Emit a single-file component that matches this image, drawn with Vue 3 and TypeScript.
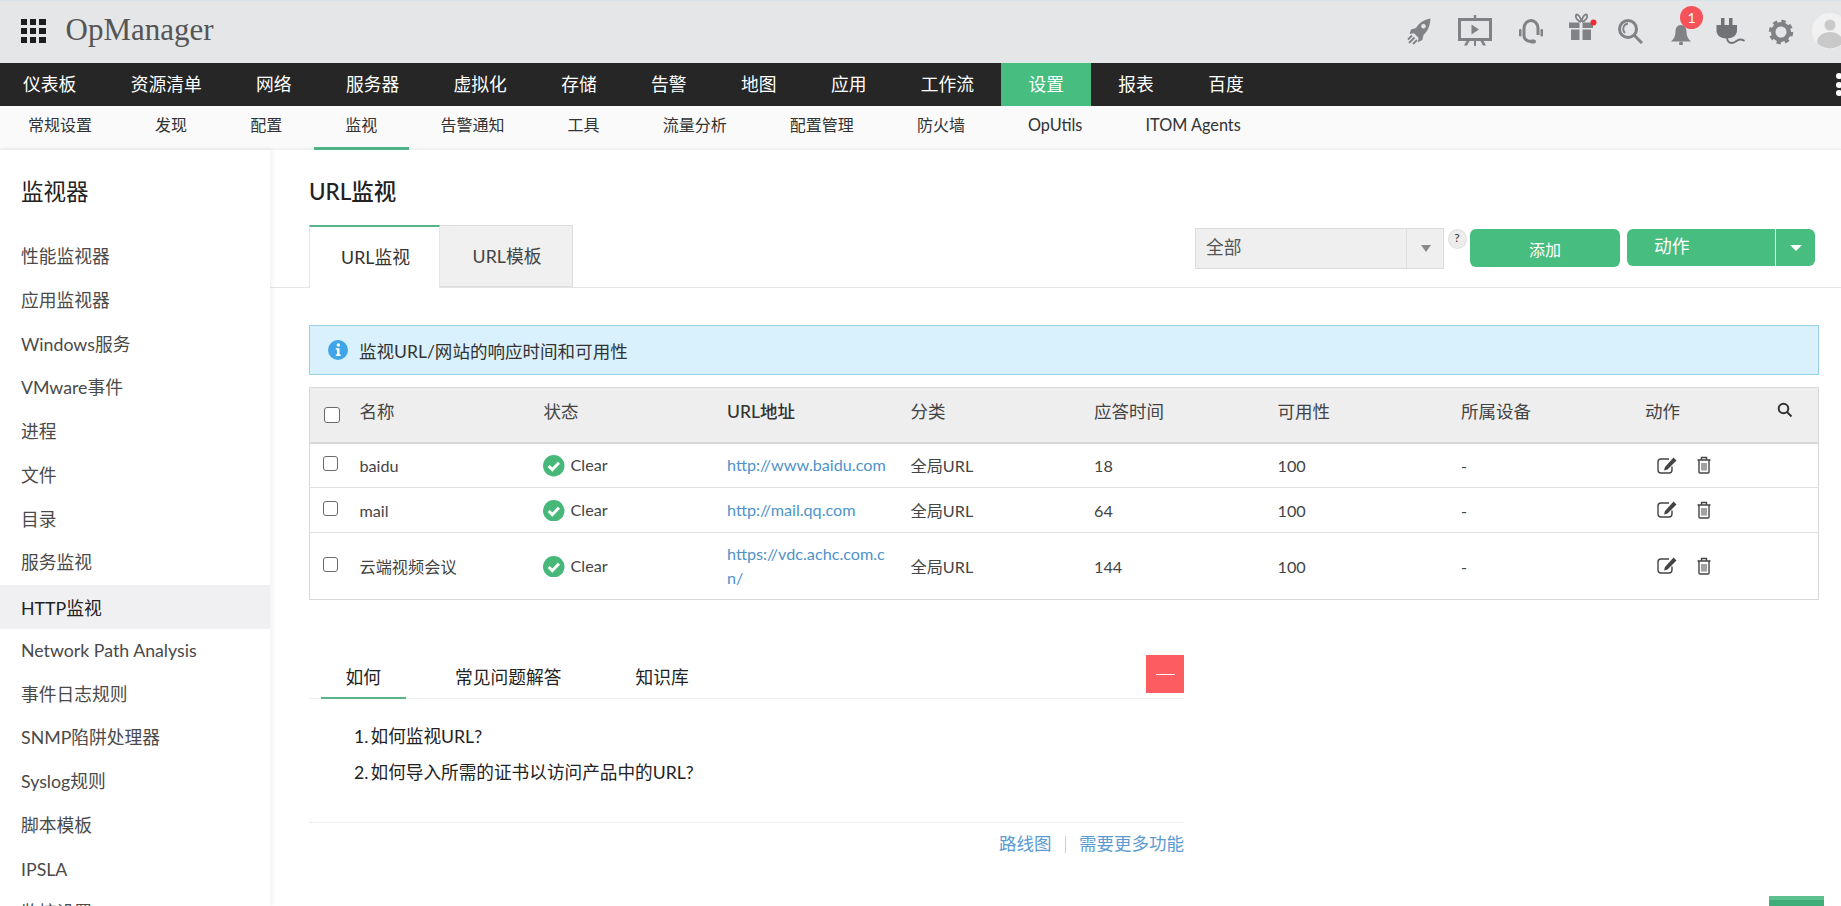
<script setup lang="ts">
const mainNav: string[] = ['仪表板', '资源清单', '网络', '服务器', '虚拟化', '存储', '告警', '地图', '应用', '工作流', '设置', '报表', '百度']
const subNav: string[] = ['常规设置', '发现', '配置', '监视', '告警通知', '工具', '流量分析', '配置管理', '防火墙', 'OpUtils', 'ITOM Agents']
const sideItems: string[] = ['性能监视器', '应用监视器', 'Windows服务', 'VMware事件', '进程', '文件', '目录', '服务监视', 'HTTP监视', 'Network Path Analysis', '事件日志规则', 'SNMP陷阱处理器', 'Syslog规则', '脚本模板', 'IPSLA', '监控设置']

interface Row { name: string; url: string; time: string; tall?: boolean }
const rows: Row[] = [
  { name: 'baidu', url: 'http://www.baidu.com', time: '18' },
  { name: 'mail', url: 'http://mail.qq.com', time: '64' },
  { name: '云端视频会议', url: 'https://vdc.achc.com.cn/', time: '144', tall: true },
]
const isLatin = (s: string): boolean => /^[A-Za-z]/.test(s)
</script>

<template>
  <div class="page">
    <header class="top">
      <div class="apps"><i v-for="n in 9" :key="n"></i></div>
      <div class="brand">OpManager</div>
      <div class="tools">
        <svg class="ic rocket" viewBox="0 0 24 27">
          <path fill-rule="evenodd" d="M23.5 0.5C17 1.5 12 5 9 10L4 11.5 2.5 16l4.5-.8 4.5 4.6-.6 4.4 4.4-2.2L16.500 17C20.500 13.500 23 8 23.500 .5ZM16.500 6a2.300 2.300 0 1 1 0 4.600 2.300 2.300 0 0 1 0-4.600Z" />
          <path class="ln" d="M5 17.500 1 21.500M7.500 19.500 2 25M10 22 6 26" />
        </svg>
        <svg class="ic board" viewBox="0 0 34 31">
          <path d="M15.800 0h2.400v4h-2.400z" />
          <path fill-rule="evenodd" d="M0 3h34v23H0ZM3 6v17h28V6Z" />
          <path d="M13.500 9.500 21 14.500l-7.500 5zM16 26h2v5h-2zM8.500 26h3l-2.500 4.500H6zM22.500 26h3l2.500 4.500h-3z" />
        </svg>
        <svg class="ic head" viewBox="0 0 24 26">
          <path class="ln3" d="M19 16V9.500a7 8 0 0 0-14 0v7c0 3 2.500 5.300 6.500 6" />
          <rect x="0" y="10" width="2.500" height="7.500" rx="1.200" />
          <rect x="21.500" y="10" width="2.500" height="7.500" rx="1.200" />
          <rect x="10.500" y="20.500" width="6.500" height="4" rx="2" />
        </svg>
        <svg class="ic gift" viewBox="0 0 28 27">
          <path class="ln1" d="M12 9C8.500 8 6 4.500 7 2 8.500 0 12 4.500 12.500 9M12.500 9c.5-4.500 3.500-9 5.500-7 1 2.500-1.500 6-5 7" />
          <path d="M0 9.500h10.500V15H0zM13.500 9.500H24V15H13.500zM2 16.500h8.500V27H2zM13.500 16.500H22V27h-8.500z" />
          <circle class="dot" cx="24.500" cy="9.500" r="3" />
        </svg>
        <svg class="ic find" viewBox="0 0 25 25">
          <circle class="ln3" cx="10" cy="10" r="8.500" />
          <path class="ln1" d="M10 4.500a5.500 5.500 0 0 0-3 9.500" />
          <path class="ln3" d="M16.500 16.500 24 24" />
        </svg>
        <span class="bell-wrap">
          <svg class="ic bell" viewBox="0 0 20 20">
            <path d="M10 0C6 0 4.500 3 4.500 7c0 4-1.500 7-4.500 9.500h20c-3-2.500-4.500-5.500-4.500-9.500 0-4-1.500-7-5.500-7Z" />
            <circle cx="10" cy="18.500" r="2" />
          </svg>
          <b class="badge">1</b>
        </span>
        <svg class="ic plug" viewBox="0 0 29 27">
          <path d="M5 0h3.500v8H5zM13 0h3.500v8H13zM0.500 7h20.500v5.500c0 5-4.500 8-10.300 8S.5 17.500.5 12.500Z" />
          <path class="ln1 wire" d="M11 19c0 4 2 6 5 6s5-3.500 8-3.500 3.500 1 4.500 1.500" />
        </svg>
        <svg class="ic gear" viewBox="0 0 26 26">
          <circle class="g1" cx="13" cy="13" r="7.800" />
          <circle class="g2" cx="13" cy="13" r="10.500" />
        </svg>
        <svg class="ic avatar" viewBox="0 0 36 36">
          <circle cx="18" cy="18" r="18" fill="#f1f1f1" />
          <circle cx="18" cy="12" r="5.500" fill="#c9c9c9" />
          <path fill="#c9c9c9" d="M5 30c0-7 6-11 13-11s13 4 13 11a18 18 0 0 1-26 0Z" />
        </svg>
      </div>
    </header>

    <nav class="main-nav">
      <a v-for="item in mainNav" :key="item" :class="{ on: item === '设置' }">{{ item }}</a>
      <span class="more"><i></i><i></i><i></i></span>
    </nav>

    <nav class="sub-nav">
      <a v-for="item in subNav" :key="item" :class="{ on: item === '监视', latin: isLatin(item) }">{{ item }}</a>
    </nav>

    <div class="body">
      <aside class="side">
        <h2>监视器</h2>
        <a v-for="item in sideItems" :key="item" :class="{ on: item === 'HTTP监视' }">{{ item }}</a>
      </aside>

      <main class="content">
        <h1>URL监视</h1>
        <div class="tabbar">
          <div class="tab active">URL监视</div>
          <div class="tab">URL模板</div>
          <div class="actions">
            <div class="select"><span>全部</span><em></em></div>
            <span class="help">?</span>
            <button class="btn add">添加</button>
            <div class="btn split"><span>动作</span><em></em></div>
          </div>
        </div>

        <section class="inner">
          <div class="info">
            <svg class="info-ic" viewBox="0 0 20 20">
              <circle cx="10" cy="10" r="10" fill="#3fa5e8" />
              <circle cx="10.300" cy="5" r="1.700" fill="#fff" />
              <path d="M7.800 8.300h3.700V14.500h1.200V16H7.800v-1.500H9V9.800H7.800Z" fill="#fff" />
            </svg>
            监视URL/网站的响应时间和可用性
          </div>

          <table class="grid">
            <colgroup>
              <col class="c0" />
              <col class="c1" />
              <col v-for="n in 5" :key="n" class="cn" />
              <col class="c1" />
            </colgroup>
            <thead>
              <tr>
                <th class="chk"><input type="checkbox" class="box big" /></th>
                <th>名称</th>
                <th>状态</th>
                <th class="strong">URL地址</th>
                <th>分类</th>
                <th>应答时间</th>
                <th>可用性</th>
                <th>所属设备</th>
                <th class="last">
                  动作
                  <svg class="th-search" viewBox="0 0 16 16">
                    <circle cx="6.500" cy="6.500" r="4.800" />
                    <path d="M10 10l4.500 4.500" />
                  </svg>
                </th>
              </tr>
            </thead>
            <tbody>
              <tr v-for="r in rows" :key="r.name" :class="{ tall: r.tall }">
                <td class="chk"><input type="checkbox" class="box" /></td>
                <td>{{ r.name }}</td>
                <td>
                  <span class="status">
                    <svg class="ok" viewBox="0 0 22 22">
                      <circle cx="11" cy="11" r="11" fill="#48b87a" />
                      <path d="M5.800 11.300 9.500 15 16.300 8" fill="none" stroke="#fff" stroke-width="3" />
                    </svg>
                    Clear
                  </span>
                </td>
                <td class="url"><a>{{ r.url }}</a></td>
                <td>全局URL</td>
                <td>{{ r.time }}</td>
                <td>100</td>
                <td>-</td>
                <td class="ops">
                  <svg class="edit" viewBox="0 0 20 17">
                    <path class="eb" d="M15 9.500v3.500a3 3 0 0 1-3 3H4a3 3 0 0 1-3-3V5a3 3 0 0 1 3-3h8" />
                    <path d="M16.500 0.500 19.500 3.500 10.500 12.500l-3.500 1 1-3.500Z" fill="#444" />
                  </svg>
                  <svg class="trash" viewBox="0 0 15 18">
                    <path class="eb" d="M1 4h13M5 4V1.500h5V4M2.500 4v12a1 1 0 0 0 1 1h8a1 1 0 0 0 1-1V4" />
                    <path class="eb th" d="M5.500 7v7.500M7.500 7v7.500M9.500 7v7.500" />
                  </svg>
                </td>
              </tr>
            </tbody>
          </table>

          <div class="help-box">
            <div class="help-tabs">
              <a class="on">如何</a>
              <a>常见问题解答</a>
              <a>知识库</a>
              <button class="close"><i></i></button>
            </div>
            <ol>
              <li>如何监视URL?</li>
              <li>如何导入所需的证书以访问产品中的URL?</li>
            </ol>
            <div class="help-foot">
              <a>路线图</a><i></i><a>需要更多功能</a>
            </div>
          </div>
        </section>
      </main>
    </div>
    <div class="peek"></div>
  </div>
</template>

<style scoped>
.page {
  position: relative;
  width: 1841px;
  height: 906px;
  overflow: hidden;
  background: #fff;
  font-family: Lato, "Noto Sans CJK SC", sans-serif;
  color: #444;
  display: flex;
  flex-direction: column;
}
.top {
  height: 63px;
  flex: none;
  display: flex;
  align-items: flex-start;
  background: #e4e6e8;
  border-top: 1px solid #d5e4ea;
  box-sizing: border-box;
  overflow: hidden;
}
.apps {
  margin: 18px 0 0 21px;
  width: 24.500px;
  height: 24px;
  display: grid;
  grid-template-columns: repeat(3, 1fr);
  grid-template-rows: repeat(3, 1fr);
  gap: 2.700px;
}
.apps i { background: #1d1d1d; display: block; }
.brand {
  margin: 9px 0 0 20px;
  font-family: "Liberation Serif", serif;
  font-size: 31px;
  line-height: 40px;
  color: #555;
}
.tools {
  margin-left: auto;
  display: flex;
  align-items: flex-start;
}
.ic { display: block; fill: #808285; flex: none; }
.ln { fill: none; stroke: #808285; stroke-width: 1.800; }
.ln1 { fill: none; stroke: #808285; stroke-width: 1.800; }
.ln3 { fill: none; stroke: #808285; stroke-width: 3; }
.wire { stroke: #707275; }
.dot { fill: #ee2a35; }
.rocket { width: 24px; height: 27px; margin-top: 17px; margin-left: 0; }
.board { width: 34px; height: 31px; margin-top: 14px; margin-left: 27px; }
.head { width: 24px; height: 26px; margin-top: 18px; margin-left: 27px; }
.gift { width: 28px; height: 27px; margin-top: 12px; margin-left: 26px; }
.find { width: 25px; height: 25px; margin-top: 18px; margin-left: 21px; }
.bell-wrap { position: relative; display: block; width: 20px; height: 20px; margin-top: 24px; margin-left: 28px; }
.bell { width: 20px; height: 20px; }
.badge {
  position: absolute;
  left: 9px;
  top: -19px;
  width: 23px;
  height: 23px;
  border-radius: 50%;
  background: #f5525a;
  color: #fff;
  font-weight: 400;
  font-size: 14px;
  line-height: 23px;
  text-align: center;
}
.plug { width: 29px; height: 27px; margin-top: 17px; margin-left: 25px; fill: #707275; }
.gear { width: 26px; height: 26px; margin-top: 18px; margin-left: 23px; }
.g1 { fill: none; stroke: #808285; stroke-width: 4.500; }
.g2 { fill: none; stroke: #808285; stroke-width: 3.500; stroke-dasharray: 4.250 4; }
.avatar { width: 36px; height: 36px; margin-top: 12px; margin-left: 18px; margin-right: -7px; }

.main-nav {
  height: 43px;
  flex: none;
  display: flex;
  align-items: stretch;
  background: #262626;
  position: relative;
}
.main-nav a {
  padding: 0 27.200px;
  font-size: 17.750px;
  line-height: 43px;
  color: #fff;
}
.main-nav a:first-child { padding-left: 23px; }
.main-nav a.on { background: #48bd80; }
.more {
  position: absolute;
  right: -1px;
  top: 10px;
  display: flex;
  flex-direction: column;
  gap: 2.500px;
}
.more i { display: block; width: 6px; height: 6px; border-radius: 50%; background: #fff; }

.sub-nav {
  height: 44px;
  flex: none;
  display: flex;
  background: #fafafa;
  box-shadow: inset 0 -3px 3px -2px #e9e9e9;
}
.sub-nav a {
  padding: 0 31.550px;
  font-size: 16px;
  line-height: 38px;
  color: #333;
  box-sizing: border-box;
  height: 44px;
}
.sub-nav a:first-child { padding-left: 28px; }
.sub-nav a.latin { font-size: 16.300px; }
.sub-nav a.on { border-bottom: 3px solid #4db285; }

.body { flex: 1; display: flex; min-height: 0; }
.side {
  width: 270px;
  flex: none;
  box-shadow: 2px 0 5px rgba(0, 0, 0, 0.06);
  position: relative;
}
.side h2 {
  margin: 24px 0 25px;
  padding-left: 21px;
  font-size: 22.500px;
  line-height: 36px;
  font-weight: 400;
  color: #222;
}
.side a {
  display: block;
  height: 43.750px;
  line-height: 43.750px;
  padding-left: 21px;
  font-size: 17.750px;
  color: #4a4a4a;
  white-space: nowrap;
}
.side a.on { background: #f0f0f2; color: #222; line-height: 47px; }

.content { flex: 1; min-width: 0; }
.content h1 {
  margin: 0;
  padding: 24px 0 15px 39px;
  font-size: 22.500px;
  line-height: 36px;
  font-weight: 500;
  color: #222;
}
.tabbar {
  height: 63px;
  box-sizing: border-box;
  display: flex;
  padding: 0 26px 0 39px;
  border-bottom: 1px solid #e4e4e4;
}
.tab {
  width: 133px;
  height: 62px;
  box-sizing: border-box;
  background: #f0f0f0;
  border: 1px solid #dedede;
  border-left: 0;
  padding-left: 2px;
  text-align: center;
  font-size: 17.750px;
  line-height: 60px;
  color: #444;
}
.tab.active {
  width: 131px;
  height: 63px;
  background: #fff;
  border: 1px solid #e4e4e4;
  border-top: 2px solid #57b488;
  border-bottom: 0;
  color: #333;
}
.actions { margin-left: auto; display: flex; align-items: flex-start; padding-top: 3px; }
.select {
  width: 249px;
  height: 41px;
  box-sizing: border-box;
  background: #efefef;
  border: 1px solid #dcdcdc;
  display: flex;
  font-size: 17.750px;
  line-height: 36px;
  color: #555;
}
.select span { flex: 1; padding-left: 10px; }
.select em {
  width: 36px;
  border-left: 1px solid #dedede;
  position: relative;
}
.select em::after {
  content: "";
  position: absolute;
  left: 14px;
  top: 16px;
  border: 5px solid transparent;
  border-top: 7px solid #8a8a8a;
  border-bottom: 0;
}
.help {
  margin: 1px 3.500px 0 3.500px;
  width: 19px;
  height: 20px;
  border-radius: 50%;
  background: #ededed;
  border: 1px solid #e0e0e0;
  box-sizing: border-box;
  font-size: 12px;
  line-height: 16px;
  text-align: center;
  color: #333;
}
.btn {
  border: 0;
  border-radius: 6px;
  background: #48bd80;
  color: #fff;
  font-family: inherit;
  padding: 0;
  margin-top: 1px;
}
.add { width: 150px; height: 38px; font-size: 16px; line-height: 42px; }
.split {
  margin-left: 7px;
  width: 188px;
  height: 37px;
  display: flex;
  font-size: 17.750px;
  line-height: 35px;
}
.split span { width: 148px; padding-left: 27px; box-sizing: border-box; }
.split em { flex: 1; border-left: 1px solid #e4f6ec; position: relative; }
.split em::after {
  content: "";
  position: absolute;
  left: 14px;
  top: 16px;
  border: 6px solid transparent;
  border-top: 6px solid #fff;
  border-bottom: 0;
}
.inner { padding: 37px 22px 0 39px; }
.info {
  height: 50px;
  box-sizing: border-box;
  background: #d9f1fd;
  border: 1px solid #9bd0e9;
  display: flex;
  align-items: center;
  padding-left: 18px;
  font-size: 17.550px;
  color: #333;
}
.info-ic { width: 20px; height: 20px; margin-right: 11px; }
.grid {
  margin-top: 12px;
  width: 100%;
  table-layout: fixed;
  border-collapse: collapse;
  border: 1px solid #d8d8d8;
  font-size: 16.200px;
}
.c0 { width: 50px; }
.c1 { width: 184px; }
.cn { width: 183.500px; }
.grid th {
  height: 55px;
  box-sizing: border-box;
  background: #eee;
  border-bottom: 2px solid #d8d8d8;
  text-align: left;
  padding: 0 0 8px;
  font-size: 17.500px;
  font-weight: 400;
  color: #444;
}
.grid th.strong { font-weight: 500; color: #333; }
.grid th.last { position: relative; }
.th-search {
  position: absolute;
  right: 25px;
  top: 14px;
  width: 16px;
  height: 16px;
  fill: none;
  stroke: #333;
  stroke-width: 2;
}
.grid td {
  height: 45px;
  box-sizing: border-box;
  border-bottom: 1px solid #e0e0e0;
  padding: 0;
  color: #444;
  vertical-align: middle;
}
.grid .tall td { height: 67px; border-bottom: 0; }
.url { padding-right: 20px !important; word-break: break-all; line-height: 24px; }
.url a { color: #4f93c9; }
.chk { padding-left: 13px !important; }
.box {
  appearance: none;
  margin: 0 0 4px;
  display: block;
  width: 15px;
  height: 15px;
  border: 1.500px solid #6a6a6a;
  border-radius: 3px;
  box-sizing: border-box;
  background: #fff;
}
th .box { margin: 8px 0 0 1px; width: 16px; height: 16px; }
.status { display: inline-flex; align-items: center; gap: 6px; margin-top: 1px; }
.ok { width: 21.500px; height: 21.500px; margin-top: 3px; margin-left: -0.500px; }
.ops { padding-left: 12px !important; padding-bottom: 3px !important; }
.edit { width: 20px; height: 17px; margin-right: 19px; vertical-align: middle; }
.trash { width: 16px; height: 18px; vertical-align: middle; }
.eb { fill: none; stroke: #444; stroke-width: 1.400; }
.th { stroke-width: 1; }
.help-box { width: 875px; margin-top: 55px; }
.help-tabs {
  position: relative;
  height: 44px;
  box-sizing: border-box;
  display: flex;
  gap: 25px;
  padding-left: 12px;
  border-bottom: 1px solid #eee;
}
.help-tabs a {
  padding: 0 24.500px;
  font-size: 17.750px;
  line-height: 44px;
  height: 43px;
  box-sizing: border-box;
  color: #222;
}
.help-tabs a.on { border-bottom: 2px solid #57b488; height: 44px; }
.close {
  position: absolute;
  right: 0;
  top: 0;
  width: 38px;
  height: 38px;
  border: 0;
  padding: 0;
  background: #fd5c60;
  display: flex;
  align-items: center;
  justify-content: center;
}
.close i { display: block; width: 19px; height: 1px; background: #fff; }
.help-box ol {
  margin: 0;
  padding: 20px 0 31px 61.500px;
  font-size: 17.650px;
  line-height: 36px;
  color: #222;
}
.help-box li::marker { content: counter(list-item) ".\2009"; }
.help-foot {
  border-top: 1px solid #eee;
  padding-top: 9px;
  display: flex;
  justify-content: flex-end;
  align-items: center;
  font-size: 17.500px;
  line-height: 24px;
  color: #5b9bd1;
}
.help-foot i { display: block; width: 1.500px; height: 17px; background: #cfcfcf; margin: 0 13px; }
.peek {
  position: absolute;
  left: 1769px;
  top: 896px;
  width: 55px;
  height: 10px;
  background: linear-gradient(#5cc08f 0 4px, #3fae78 4px);
}
</style>
